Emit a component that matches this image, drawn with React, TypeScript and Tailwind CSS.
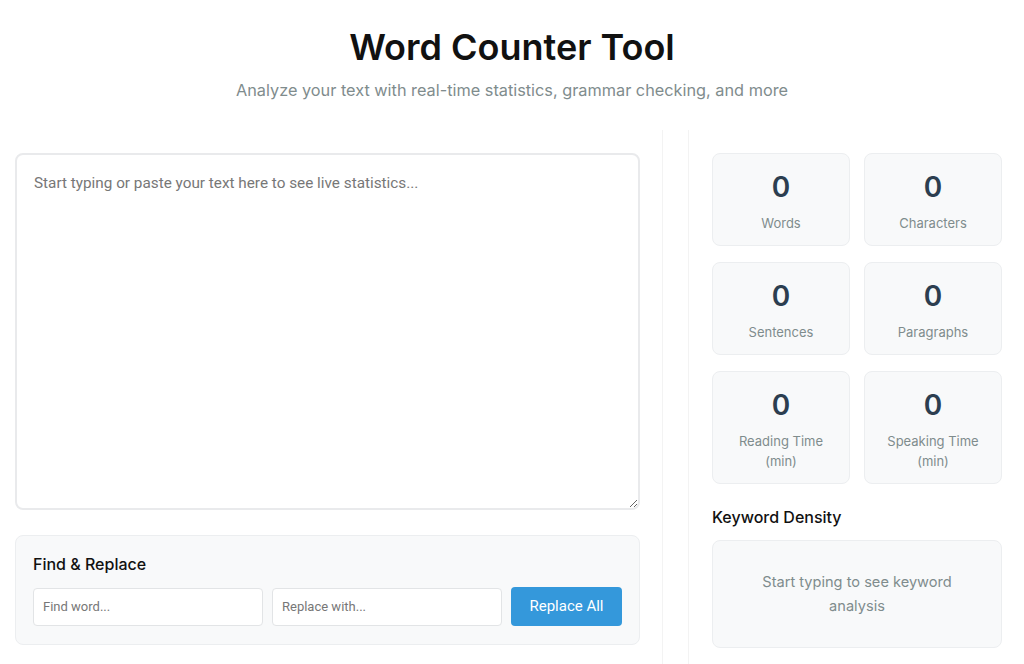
import { useState } from 'react'

const stats = [
  { label: 'Words' },
  { label: 'Characters' },
  { label: 'Sentences' },
  { label: 'Paragraphs' },
  { label: 'Reading Time (min)' },
  { label: 'Speaking Time (min)' },
]

export default function App() {
  const [text, setText] = useState('')
  const [find, setFind] = useState('')
  const [replace, setReplace] = useState('')

  return (
    <div className="min-h-[664px] w-full overflow-hidden bg-white font-['Inter',sans-serif]">
      <div className="pt-[27px] text-center">
        <h1 className="text-[36px] font-semibold leading-[40px] text-[#111]">Word Counter Tool</h1>
        <p className="mt-[11px] text-[16.3px] leading-[24px] text-[#7f8c8d]">
          Analyze your text with real-time statistics, grammar checking, and more
        </p>
      </div>

      <div className="mt-[28px] flex">
        <div className="w-[663px] shrink-0 border-r border-[#f3f3f3] pl-[15px] pr-[22px] pt-[23px] pb-[40px]">
          <textarea
            value={text}
            onChange={(e) => setText(e.target.value)}
            placeholder="Start typing or paste your text here to see live statistics..."
            className="block h-[357px] w-full rounded-lg border-2 border-[#e9eaec] p-[17px] font-['Roboto',sans-serif] text-[15.3px] leading-[22px] text-[#333] outline-none placeholder:text-[#777]"
          />

          <div className="mt-[25px] rounded-lg border border-[#eceef0] bg-[#f8f9fa] px-[17px] pt-[16px] pb-[18px]">
            <h3 className="text-[16px] font-medium leading-[24px] text-[#111]">Find &amp; Replace</h3>
            <div className="mt-[11px] flex items-center gap-[9px]">
              <input
                value={find}
                onChange={(e) => setFind(e.target.value)}
                placeholder="Find word..."
                className="h-[38px] w-[230px] rounded border border-[#e2e4e6] bg-white pl-[9px] font-['Roboto',sans-serif] text-[13px] text-[#333] outline-none placeholder:text-[#777]"
              />
              <input
                value={replace}
                onChange={(e) => setReplace(e.target.value)}
                placeholder="Replace with..."
                className="h-[38px] w-[230px] rounded border border-[#e2e4e6] bg-white pl-[9px] font-['Roboto',sans-serif] text-[13px] text-[#333] outline-none placeholder:text-[#777]"
              />
              <button className="h-[39px] w-[111px] rounded bg-[#3498db] font-['Roboto',sans-serif] text-[15px] text-white">
                Replace All
              </button>
            </div>
          </div>
        </div>

        <div className="ml-[25px] w-[336px] shrink-0 border-l border-[#f3f3f3] pl-[23px] pr-[22px] pt-[23px]">
          <div className="grid grid-cols-2 gap-x-[14px] gap-y-[16px]">
            {stats.map((s) => (
              <div
                key={s.label}
                className="rounded-lg border border-[#eceef0] bg-[#f8f9fa] px-[10px] pt-[15px] pb-[12px] text-center"
              >
                <div className="text-[28px] font-semibold leading-[36px] text-[#2c3e50]">0</div>
                <div className="mx-auto mt-[8px] max-w-[100px] text-[13px] leading-[20px] text-[#7f8c8d]">
                  {s.label}
                </div>
              </div>
            ))}
          </div>

          <h3 className="mt-[21px] text-[16px] font-medium leading-[24px] text-[#111]">Keyword Density</h3>
          <div className="mt-[11px] rounded-lg border border-[#eceef0] bg-[#f8f9fa] px-[40px] py-[29px] text-center text-[14.6px] leading-[24px] text-[#7f8c8d]">
            Start typing to see keyword analysis
          </div>
        </div>
      </div>
    </div>
  )
}
